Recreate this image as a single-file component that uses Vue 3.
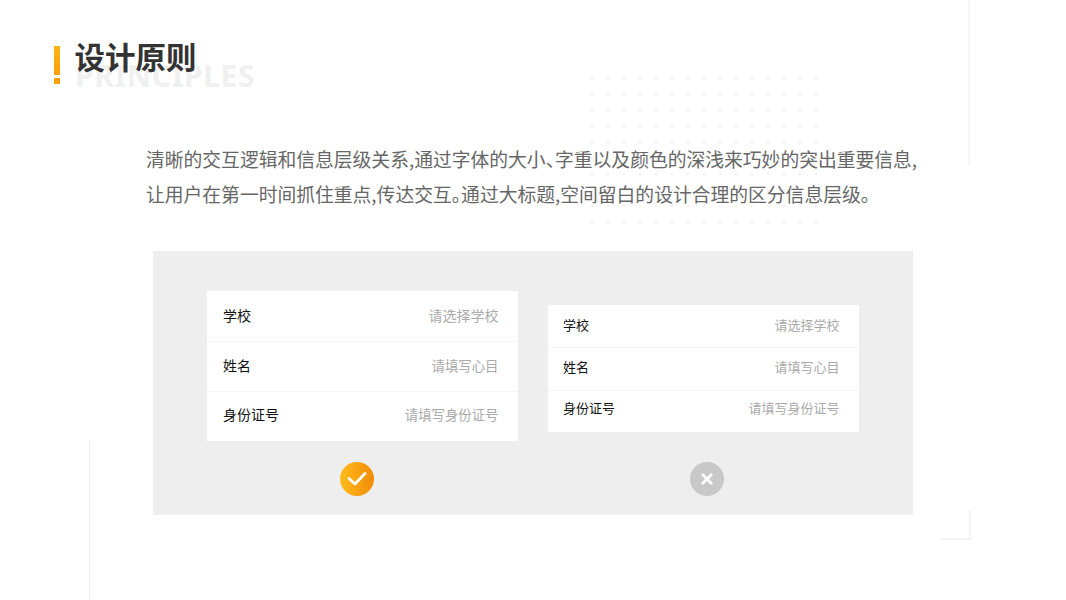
<script setup>
const left = [
  { label: '学校', hint: '请选择学校' },
  { label: '姓名', hint: '请填写心目' },
  { label: '身份证号', hint: '请填写身份证号' },
]
const right = left
</script>

<template>
  <div class="slide">
    <div class="deco dots"></div>
    <div class="deco line-top"></div>
    <div class="deco line-left"></div>
    <div class="deco corner"></div>

    <header class="head">
      <div class="mark"><i class="bar"></i><i class="point"></i></div>
      <div class="titles">
        <div class="ghost">PRINCIPLES</div>
        <h1 class="title">设计原则</h1>
      </div>
    </header>

    <div class="intro">
      <p>清晰的交互逻辑和信息层级关系,通过字体的大小、字重以及颜色的深浅来巧妙的突出重要信息,</p>
      <p>让用户在第一时间抓住重点,传达交互。通过大标题,空间留白的设计合理的区分信息层级。</p>
    </div>

    <section class="panel">
      <div class="col good">
        <div class="card">
          <div v-for="r in left" :key="r.label" class="row">
            <span class="label">{{ r.label }}</span>
            <span class="hint">{{ r.hint }}</span>
          </div>
        </div>
      </div>
      <div class="col bad">
        <div class="card">
          <div v-for="r in right" :key="r.label" class="row">
            <span class="label">{{ r.label }}</span>
            <span class="hint">{{ r.hint }}</span>
          </div>
        </div>
      </div>
      <div class="badge yes">
        <svg width="20" height="16" viewBox="0 0 20 16"><path d="M2 7.5 L8 13 L18 2.5" fill="none" stroke="#fff" stroke-width="2.8" stroke-linecap="round" stroke-linejoin="round"/></svg>
      </div>
      <div class="badge no">
        <svg width="12" height="12" viewBox="0 0 12 12"><path d="M1.8 1.8 L10.2 10.2 M10.2 1.8 L1.8 10.2" fill="none" stroke="#fff" stroke-width="2.8" stroke-linecap="round"/></svg>
      </div>
    </section>
  </div>
</template>

<style scoped>
.slide {
  position: relative;
  width: 1066px;
  height: 600px;
  overflow: hidden;
  background: #fff;
  font-family: "Noto Sans CJK SC", "Noto Sans", sans-serif;
}
.deco { position: absolute; }
.dots {
  left: 584px;
  top: 70px;
  width: 240px;
  height: 160px;
  background-image: radial-gradient(circle at 8px 8px, #eeeeee 1.2px, transparent 1.6px);
  background-size: 16px 16px;
}
.line-top { left: 968px; top: 0; width: 2px; height: 166px; background: #f7f7f7; }
.line-left { left: 89px; top: 441px; width: 1px; height: 159px; background: #f0f0f0; }
.corner {
  left: 941px;
  top: 510px;
  width: 30px;
  height: 30px;
  box-sizing: border-box;
  border-right: 2px solid #f3f3f3;
  border-bottom: 2px solid #f3f3f3;
}
.head {
  position: relative;
  display: flex;
  height: 100px;
  padding: 36px 0 0 54px;
  box-sizing: border-box;
}
.mark {
  display: flex;
  flex-direction: column;
  gap: 3px;
  width: 6px;
  margin-top: 10px;
}
.bar { display: block; height: 29px; background: linear-gradient(#ffb31a, #ff9f0a); }
.point { display: block; height: 6px; background: #ff9f0a; }
.titles { position: relative; margin-left: 14.5px; }
.title {
  position: relative;
  margin: 0;
  font-size: 30.5px;
  line-height: 40px;
  font-weight: 700;
  color: #333;
  white-space: nowrap;
}
.ghost {
  position: absolute;
  left: 0.5px;
  top: 20px;
  font-family: "Noto Sans", sans-serif;
  font-size: 30px;
  line-height: 40px;
  font-weight: 700;
  letter-spacing: 0.6px;
  color: #f0f0f0;
  white-space: nowrap;
}
.intro {
  position: relative;
  margin: 41px 0 0 146px;
  font-size: 18.8px;
  line-height: 35px;
  color: #666;
  white-space: nowrap;
  font-feature-settings: "halt";
}
.intro p { margin: 0; }
.panel {
  display: grid;
  grid-template-columns: 311px 311px;
  grid-template-rows: 171px 34px;
  column-gap: 30px;
  width: 760px;
  height: 264px;
  box-sizing: border-box;
  margin: 40px 0 0 153px;
  padding: 40px 0 0 54px;
  background: #eeeeee;
}
.card { background: #fff; }
.good .row { height: 50px; font-size: 14px; padding-bottom: 2px; }
.good .row:nth-child(2) { padding-bottom: 3px; }
.good .row:nth-child(3) { padding-bottom: 6px; }
.good .row:nth-child(n+2) .hint { font-size: 13.4px; }
.bad { padding-top: 14px; }
.bad .row { height: 42.3px; font-size: 13px; padding-bottom: 3px; }
.bad .row:nth-child(2) { padding-bottom: 5px; }
.bad .row:nth-child(3) { padding-bottom: 7px; }
.row {
  display: flex;
  align-items: center;
  justify-content: space-between;
  box-sizing: border-box;
  padding: 0 19.5px 0 16px;
  border-top: 1px solid #f6f6f6;
}
.bad .row { padding-left: 15px; }
.row:first-child { border-top: 0; }
.label { color: #111; }
.hint { color: #aaa; }
.badge {
  display: flex;
  align-items: center;
  justify-content: center;
  width: 34px;
  height: 34px;
  border-radius: 50%;
}
.yes { margin-left: 132.5px; background: linear-gradient(90deg, #ffbb1c, #f28c06); }
.no { margin-left: 141.5px; background: #c8c8c8; }
</style>
